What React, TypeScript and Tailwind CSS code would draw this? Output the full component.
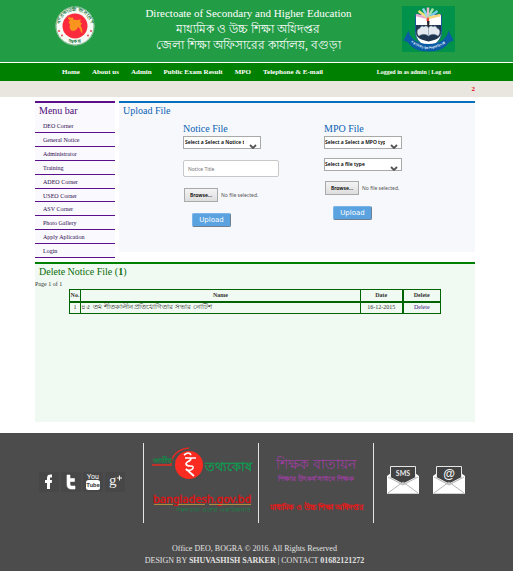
import type { ReactNode } from "react";

const serif = "font-['Liberation_Serif','Noto_Sans',serif]";
const sans = "font-['Noto_Sans','Open_Sans',sans-serif]";

const navItems = ["Home", "About us", "Admin", "Public Exam Result", "MPO", "Telephone & E-mail"];
const menuItems = [
  "DEO Corner",
  "General Notice",
  "Administrator",
  "Training",
  "ADEO Corner",
  "USEO Corner",
  "ASV Corner",
  "Photo Gallery",
  "Apply Aplication",
  "Login",
];

function GovernmentSeal() {
  return (
    <svg viewBox="0 0 80 80" className="size-10 shrink-0" role="img" aria-label="Government seal">
      <defs>
        <path id="sealTop" d="M10 49 A31 31 0 1 1 70 49" />
        <path id="sealBottom" d="M22 69 A35 35 0 0 0 58 69" />
      </defs>
      <circle cx="40" cy="40" r="39" fill="#f7fbf5" />
      <circle cx="40" cy="40" r="38" fill="none" stroke="#4c9a63" strokeWidth="1.5" />
      <circle cx="40" cy="40" r="25" fill="#fb2a3c" />
      <path
        d="M28 21l4 3 3-2 2 5 6 1 9-1-2 5 4 3-3 4 3 6 1 10-3-3-2-6-4-4-3 5-5 3-6-1-3-6 1-6-3-5 3-3-4-4z"
        fill="#f9941e"
      />
      <g fill="#e5343f">
        <circle cx="8" cy="50" r="1.8" />
        <circle cx="14" cy="59" r="1.8" />
        <circle cx="72" cy="50" r="1.8" />
        <circle cx="66" cy="59" r="1.8" />
      </g>
      <text fontSize="9" fontWeight="700" fill="#14753b">
        <textPath href="#sealTop" startOffset="50%" textAnchor="middle">
          গণপ্রজাতন্ত্রী বাংলাদেশ
        </textPath>
      </text>
      <text fontSize="9" fontWeight="700" fill="#14753b">
        <textPath href="#sealBottom" startOffset="50%" textAnchor="middle">
          সরকার
        </textPath>
      </text>
    </svg>
  );
}

function DirectorateCrest() {
  return (
    <svg viewBox="0 0 106 92" className="h-[46px] w-[53px] shrink-0" role="img" aria-label="Directorate crest">
      <rect width="106" height="92" fill="#00914a" />
      <path d="M27 17h52v36c0 15-12 25-26 31C39 78 27 68 27 53z" fill="#fff" stroke="#155a98" strokeWidth="2" />
      <path d="M28 38h50v16c0 8-8 14-25 17-17-3-25-9-25-17z" fill="#1f3550" />
      <g strokeWidth="5" fill="none">
        <path d="M52 24L28 18" stroke="#e8a9d0" />
        <path d="M52 24L33 10" stroke="#f3e27a" />
        <path d="M52 24L42 5" stroke="#8ed8ef" />
        <path d="M52 24L52 3" stroke="#f5b6cf" />
        <path d="M52 24L62 5" stroke="#a4e3a9" />
        <path d="M52 24L71 10" stroke="#77c9ee" />
        <path d="M52 24L77 18" stroke="#f7d57e" />
      </g>
      <path d="M52 22q4 5 2 8h-5q-1-4 3-8z" fill="#ef4136" />
      <path d="M50 30h5l-1 14h-3z" fill="#222" />
      <path
        d="M53 60c-5-5-15-4-19 0-5-5-5-14 2-15 1-5 5-6 8-3 3-4 8-2 9 3 1-5 6-7 9-3 3-3 7-2 8 3 7 1 7 10 2 15-4-4-14-5-19 0z"
        fill="#e3e9ef"
        stroke="#8e9fb0"
      />
      <path d="M53 45v14" stroke="#5b7c9f" />
      <path d="M13 49C16 66 31 76 53 76S90 66 93 49l10 20-8 3C86 85 73 91 53 91S20 85 11 72l-8-3z" fill="#0b5ba5" />
      <path id="ribbon" d="M13 65 C21 79 37 86 53 86 S85 79 93 65" fill="none" />
      <text fontSize="6" fontWeight="700" fill="#e7f2fb">
        <textPath href="#ribbon" startOffset="50%" textAnchor="middle">
          মাধ্যমিক ও উচ্চ শিক্ষা অধিদপ্তর
        </textPath>
      </text>
    </svg>
  );
}

function Dropdown({ label, text, inset = "pl-px" }: { label: string; text: string; inset?: string }) {
  return (
    <div className="relative w-[78px]">
      <select
        aria-label={label}
        className={`block h-[13px] w-full appearance-none overflow-hidden border border-[#a9a9a9] bg-white pr-4 ${inset} text-[5px] leading-[11px] font-semibold text-black ${sans}`}
      >
        <option>{text}</option>
      </select>
      <svg viewBox="0 0 8 5" className="pointer-events-none absolute right-1 bottom-0 h-[5px] w-2" aria-hidden="true">
        <path d="M1 1l3 3 3-3" fill="none" stroke="#555" strokeWidth="1.8" />
      </svg>
    </div>
  );
}

function FilePicker({ label }: { label: string }) {
  return (
    <label className={`flex items-center gap-[3px] text-[5px] leading-3 text-[#555] ${sans}`}>
      <input type="file" aria-label={label} className="sr-only" />
      <span className="h-[14px] w-[34px] border border-[#a9a9a9] bg-linear-to-b from-[#f3f3f3] to-[#dedede] text-center font-semibold text-black">
        Browse...
      </span>
      No file selected.
    </label>
  );
}

function UploadButton() {
  return (
    <button
      type="submit"
      className="block h-[14px] w-[39px] rounded-xs border border-t-[#7bb5ea] border-r-[#6d7f90] border-b-[#6d7f90] border-l-[#7bb5ea] bg-[#5ba2e0] font-['DejaVu_Sans',sans-serif] text-[7px] leading-3 text-white"
    >
      Upload
    </button>
  );
}

function SocialLink({ label, children }: { label: string; children: ReactNode }) {
  return (
    <a href="#" aria-label={label} className="block size-5 bg-[#474747]">
      <svg viewBox="0 0 20 20" className="size-5">
        {children}
      </svg>
    </a>
  );
}

function Envelope({ label, children }: { label: string; children: ReactNode }) {
  return (
    <a href="#" aria-label={label}>
      <svg viewBox="0 0 32 30" className="h-[30px] w-8">
        <path d="M0 11l4-3h24l4 3v18H0z" fill="#fff" />
        <path d="M3.500 1.500h25v11L16 19 3.500 12.500z" fill="#424242" stroke="#e6e6e6" />
        <path d="M1 28l15-11 15 11M1 12l15 8 15-8" fill="none" stroke="#b5b5b5" />
        <path d="M0 28.500h32" stroke="#d0d0d0" />
        {children}
      </svg>
    </a>
  );
}

export default function App() {
  return (
    <div className={`bg-white ${serif}`}>
      <header className="flex h-[62px] items-start justify-between bg-[#229c45] pt-1.5 pr-[58px] pl-[55px]">
        <GovernmentSeal />
        <div className="text-center whitespace-nowrap text-white">
          <h1 className="text-[11px] leading-[15px]">Directoate of Secondary and Higher Education</h1>
          <p className="text-[12px] leading-4">মাধ্যমিক ও উচ্চ শিক্ষা অধিদপ্তর</p>
          <p className="text-[12px] leading-4">জেলা শিক্ষা অফিসারের কার্যালয়, বগুড়া</p>
        </div>
        <DirectorateCrest />
      </header>

      <nav className="mt-px flex h-[18px] items-center justify-between bg-[#008000] pr-[62px] pl-[62px] font-bold whitespace-nowrap text-white">
        <ul className="flex gap-3 text-[7px] leading-3">
          {navItems.map((item) => (
            <li key={item}>
              <a href="#">{item}</a>
            </li>
          ))}
        </ul>
        <p className="text-[6px] leading-3">
          Logged in as admin | <a href="#">Log out</a>
        </p>
      </nav>

      <div className="h-4 bg-[#e8e6df] pr-[38px] pl-[35px]">
        <p className="text-right text-[7px] leading-4 font-bold text-red-600">2</p>
      </div>

      <main className="pt-1 pr-[38px] pl-[35px]">
        <div className="flex items-start gap-1">
          <aside className="w-20 shrink-0 border-t-2 border-[#5c0f8b] bg-[#faf9fd] text-[#4b0a77]">
            <h2 className="pl-1 text-[10px] leading-4">Menu bar</h2>
            <ul className="flex h-[139px] flex-col text-[6px] leading-[14px] text-[#2d0a4e]">
              {menuItems.map((item) => (
                <li key={item} className="min-h-0 flex-1 border-b border-[#5c0f8b] pl-2">
                  <a href="#">{item}</a>
                </li>
              ))}
            </ul>
          </aside>

          <section className="h-[151px] flex-1 border-t-2 border-[#0670bd] bg-[#f6f8fb] text-[#0b62b4]">
            <h2 className="pl-1 text-[10px] leading-4">Upload File</h2>
            <div className="flex gap-[45px] pt-[3px] pl-16">
              <form className="w-24">
                <h3 className="text-[10px] leading-[14px]">Notice File</h3>
                <Dropdown label="Notice type" text="Select a Select a Notice type" />
                <input
                  type="text"
                  aria-label="Notice title"
                  placeholder="Notice Title"
                  className={`mt-[11px] block h-[17px] w-full rounded-xs border border-[#c8c8c8] bg-white px-1 text-[5px] text-[#555] placeholder:text-[#777] ${sans}`}
                />
                <div className="mt-[11px] pl-px">
                  <FilePicker label="Notice file" />
                </div>
                <div className="mt-[11px] pl-[9px]">
                  <UploadButton />
                </div>
              </form>
              <form className="w-24">
                <h3 className="text-[10px] leading-[14px]">MPO File</h3>
                <Dropdown label="MPO type" text="Select a Select a MPO type" inset="pl-0" />
                <div className="mt-[9px]">
                  <Dropdown label="File type" text="Select a file type" inset="pl-0" />
                </div>
                <div className="mt-[10px] pl-px">
                  <FilePicker label="MPO file" />
                </div>
                <div className="mt-[11px] pl-[9px]">
                  <UploadButton />
                </div>
              </form>
            </div>
          </section>
        </div>

        <section className="mt-1 h-40 border-t-2 border-[#008000] bg-[#f0faf2] text-[#333]">
          <h2 className="pl-1 text-[10px] leading-4 text-[#0b6a0b]">
            Delete Notice File (<b>1</b>)
          </h2>
          <p className="text-[6px] leading-[9px]">Page 1 of 1</p>
          <div className="pr-[34px] pl-[34px]">
            <table className="w-full table-fixed border-collapse border border-[#006400] text-center text-[6px] leading-[9px]">
              <colgroup>
                <col className="w-[11px]" />
                <col />
                <col className="w-[42px]" />
                <col className="w-[38px]" />
              </colgroup>
              <thead>
                <tr className="h-3 border-b-2 border-[#006400]">
                  <th className="border-r border-[#006400] p-0">No.</th>
                  <th className="border-r border-[#006400] p-0">Name</th>
                  <th className="border-r-2 border-[#006400] p-0">Date</th>
                  <th className="p-0">Delete</th>
                </tr>
              </thead>
              <tbody>
                <tr className="h-3">
                  <td className="border-r border-[#006400] p-0">1</td>
                  <td className="border-r border-[#006400] p-0 text-left text-[7px]">৪৫ তম শীতকালীন প্রতিযোগিতার সভার নোটিশ</td>
                  <td className="border-r-2 border-[#006400] p-0">16-12-2015</td>
                  <td className="p-0">
                    <a href="#" className="text-[#3a0a80]">
                      Delete
                    </a>
                  </td>
                </tr>
              </tbody>
            </table>
          </div>
        </section>
      </main>

      <footer className="mt-[11px] mb-0.5 h-[138px] bg-[#4c4c4c] pt-2.5 text-[#e2e2e2]">
        <div className="grid h-20 grid-cols-[143fr_115fr_116fr_139fr]">
          <div className="flex justify-start gap-0.5 pt-[29px] pl-[39px]">
            <SocialLink label="Facebook">
              <path d="M8 17v-6H6V8h2V6c0-2.500 1.300-3.500 3.500-3.500H13v3h-1.200c-.7 0-.8.3-.8 1V8h2l-.3 3H11v6z" fill="#fff" />
            </SocialLink>
            <SocialLink label="Twitter">
              <path d="M6 3h3v3.500h4.500v3H9v2.500c0 1.400.6 2 2 2h3v3h-3.500C7.500 17 6 15.500 6 12.500z" fill="#fff" strokeLinejoin="round" stroke="#fff" strokeWidth=".6" />
            </SocialLink>
            <SocialLink label="YouTube">
              <text x="10" y="7" fontSize="7" textAnchor="middle" fill="#fff" fontFamily="Roboto, sans-serif">You</text>
              <rect x="3" y="8" width="14" height="10" rx="2.500" fill="#fff" />
              <text x="10" y="15" fontSize="6" fontWeight="700" textAnchor="middle" fill="#474747" fontFamily="Roboto, sans-serif">Tube</text>
            </SocialLink>
            <SocialLink label="Google Plus">
              <text x="4" y="13" fontSize="15" fill="#f2f2f2" fontFamily="Liberation Serif, serif">g</text>
              <path d="M12 6h5M14.500 3.500v5" stroke="#f2f2f2" strokeWidth="1.100" />
            </SocialLink>
          </div>

          <a href="#" aria-label="National information portal" className="block border-l border-[#e4e4e4]">
            <svg viewBox="0 0 114 80" className="h-20 w-full">
              <path d="M8 22h19c0-9 7-16 18-17" fill="none" stroke="#e52b20" strokeWidth="1.300" />
              <circle cx="45" cy="22" r="14" fill="#fa2b20" />
              <text x="9" y="20" fontSize="7" fontWeight="700" fill="#0f8b49">জাতীয়</text>
              <path d="M40 12q5-4 7 0M41 15h11M47 15c0 4-5 3-5 6 1 4 8 0 7 4-1 3-6 3-7 1l8 7" fill="none" stroke="#fff" strokeWidth="1.700" />
              <text x="84" y="28" fontSize="13" textAnchor="middle" fill="#0f9a50" stroke="#0f9a50" strokeWidth=".4">তথ্যকোষ</text>
              <text x="9" y="60" fontSize="11" fill="#e30f0f" stroke="#e30f0f" strokeWidth=".3" fontFamily="Noto Sans, sans-serif">bangladesh.gov.bd</text>
              <path d="M10 61.500h19M34 61.500h27M65 61.500h42" stroke="#b08a3b" strokeWidth="1.200" />
              <text x="107" y="69" fontSize="6" textAnchor="end" fill="#0f8b49">সকল তথ্য ও সেবা এক ঠিকানায়</text>
            </svg>
          </a>

          <div className="border-x border-[#e4e4e4] text-center whitespace-nowrap">
            <p className="pt-3.5 text-[14px] leading-4 text-[#9b3f9f]">শিক্ষক বাতায়ন</p>
            <p className="text-[7px] leading-3 font-bold text-[#9b3f9f]">শিক্ষার উৎকর্ষ সাধনে শিক্ষক</p>
            <p className="pt-4 text-[8px] leading-[14px] font-bold text-[#f51212]">মাধ্যমিক ও উচ্চ শিক্ষা অধিদপ্তর</p>
          </div>

          <div className="flex gap-3.5 pt-[22px] pl-[13px]">
            <Envelope label="SMS">
              <text x="16" y="11" fontSize="7" fontWeight="700" textAnchor="middle" fill="#e8e8e8" fontFamily="Lato, sans-serif">SMS</text>
            </Envelope>
            <Envelope label="Email">
              <text x="16" y="13" fontSize="12" fontWeight="700" textAnchor="middle" fill="#f2f2f2" fontFamily="Liberation Sans, sans-serif">@</text>
            </Envelope>
          </div>
        </div>
        <div className="pt-5 pr-1 text-center text-[8px] leading-3">
          <p>Office DEO, BOGRA © 2016. All Rights Reserved</p>
          <p>
            DESIGN BY <b>SHUVASHISH SARKER</b> | CONTACT <b>01682121272</b>
          </p>
        </div>
      </footer>
    </div>
  );
}
